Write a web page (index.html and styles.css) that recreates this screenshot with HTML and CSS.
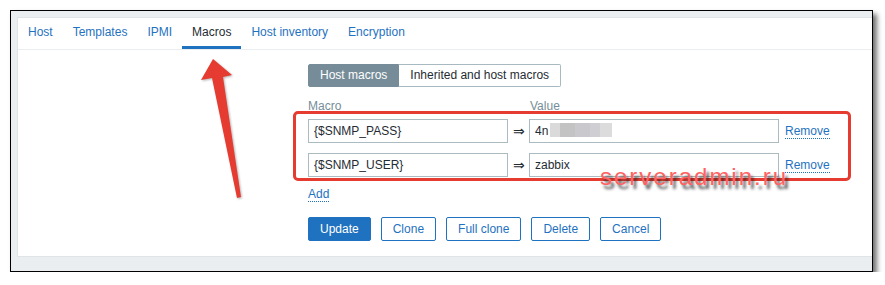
FILE: index.html
```html
<!DOCTYPE html>
<html lang="en">
<head>
  <meta charset="UTF-8" />
  <title>Host macros - Zabbix</title>
  <link rel="stylesheet" href="styles.css">
</head>
<body>
  <div class="window">
    <div class="panel">
      <ul class="tabs">
        <li><a href="#">Host</a></li>
        <li><a href="#">Templates</a></li>
        <li><a href="#">IPMI</a></li>
        <li class="active"><a href="#">Macros</a></li>
        <li><a href="#">Host inventory</a></li>
        <li><a href="#">Encryption</a></li>
      </ul>
      <div class="tab-body">
        <div class="toggle">
          <span class="toggle-item active">Host macros</span>
          <span class="toggle-item">Inherited and host macros</span>
        </div>

        <div class="macro-grid macro-head">
          <span>Macro</span>
          <span></span>
          <span>Value</span>
        </div>
        <div class="macro-grid macro-row">
          <input class="form-input" value="{$SNMP_PASS}" />
          <span class="arrow">&rArr;</span>
          <div class="value-cell">
            <input class="form-input" value="4n" />
            <span class="redacted"></span>
          </div>
          <span class="link">Remove</span>
        </div>
        <div class="macro-grid macro-row">
          <input class="form-input" value="{$SNMP_USER}" />
          <span class="arrow">&rArr;</span>
          <div class="value-cell">
            <input class="form-input" value="zabbix" />
          </div>
          <span class="link">Remove</span>
        </div>

        <span class="link add">Add</span>

        <div class="buttons">
          <button class="btn btn-main">Update</button>
          <button class="btn">Clone</button>
          <button class="btn">Full clone</button>
          <button class="btn">Delete</button>
          <button class="btn">Cancel</button>
        </div>
      </div>
    </div>

    <!-- annotations drawn over the screenshot -->
    <div class="mark-box"></div>
    <svg class="mark-arrow" width="80" height="165" viewBox="0 0 80 165">
      <polygon points="33,9 21,30 32,28 57,148 61,147 43,27 52,25" fill="#e53b30" />
    </svg>
    <div class="watermark">serveradmin.ru</div>
  </div>
</body>
</html>
```

FILE: styles.css
```css
body {
  margin: 0;
  background: #fff;
  font-family: "Liberation Sans", Arial, sans-serif;
  font-size: 12px;
  color: #1f2c33;
}
.window {
  position: relative;
  box-sizing: border-box;
  width: 863px;
  height: 262px;
  margin: 10px 0 0 10px;
  padding: 6px 0 0 6px;
  border: 1px solid #000;
  background: #ebeef0;
  box-shadow: 4px 4px 5px rgba(0, 0, 0, 0.55);
}
.panel {
  box-sizing: border-box;
  height: 240px;
  background: #fff;
  border: 1px solid #dfe4e7;
  border-right: none;
}
.tabs {
  display: flex;
  margin: 0;
  padding: 0;
  list-style: none;
  border-bottom: 1px solid #ebeef0;
}
.tabs a {
  display: block;
  padding: 0 10px;
  line-height: 28px;
  border-bottom: 3px solid transparent;
  color: #1f72bf;
  text-decoration: none;
}
.tabs .active a {
  color: #1f2c33;
  border-bottom-color: #1f72bf;
}
.tab-body {
  padding: 14px 0 0 290px;
}
.toggle {
  display: flex;
}
.toggle-item {
  padding: 0 11px;
  line-height: 21px;
  border: 1px solid #a9b9c1;
  color: #1f2c33;
}
.toggle-item + .toggle-item {
  border-left: none;
  border-radius: 0 2px 2px 0;
}
.toggle-item.active {
  background: #768d99;
  border-color: #768d99;
  color: #fff;
  border-radius: 2px 0 0 2px;
}
.macro-grid {
  display: grid;
  grid-template-columns: 200px 21px 250px auto;
  align-items: center;
}
.macro-head {
  margin: 12px 0 6px;
  line-height: 14px;
  color: #768d99;
}
.macro-head span:last-child {
  padding-left: 1px;
}
.macro-row + .macro-row {
  margin-top: 10px;
}
.form-input {
  box-sizing: border-box;
  width: 100%;
  height: 24px;
  margin: 0;
  padding: 0 5px;
  border: 1px solid #acbbc2;
  background: #fff;
  font-family: inherit;
  font-size: 12px;
  color: #1f2c33;
}
.arrow {
  text-align: center;
  font-size: 14px;
  color: #1f2c33;
}
.value-cell {
  position: relative;
}
.redacted {
  position: absolute;
  left: 21px;
  top: 4px;
  width: 62px;
  height: 14px;
  background: linear-gradient(90deg, #dadada 0 16%, #c3c3c3 16% 40%, #c8c8cd 40% 64%, #cfcfd3 64% 80%, #dcdcdc 80%);
}
.link {
  color: #1f72bf;
  border-bottom: 1px dotted #1f72bf;
  cursor: pointer;
}
.macro-row .link {
  justify-self: start;
  margin-left: 6px;
  line-height: 14px;
}
.add {
  display: inline-block;
  margin-top: 10px;
  line-height: 14px;
}
.buttons {
  display: flex;
  gap: 10px;
  margin-top: 15px;
}
.btn {
  height: 24px;
  padding: 0 11px;
  border: 1px solid #1f72bf;
  border-radius: 2px;
  background: #fff;
  color: #1f72bf;
  font-family: inherit;
  font-size: 12px;
  cursor: pointer;
}
.btn-main {
  background: #1f72bf;
  color: #fff;
}
.mark-box {
  position: absolute;
  left: 282px;
  top: 100px;
  width: 558px;
  height: 70px;
  box-sizing: border-box;
  border: 3px solid #e53b30;
  border-radius: 5px;
}
.mark-arrow {
  position: absolute;
  left: 169px;
  top: 39px;
  filter: drop-shadow(1px 1px 1px rgba(0, 0, 0, 0.3));
}
.watermark {
  position: absolute;
  left: 589px;
  top: 154px;
  font-size: 24px;
  line-height: 24px;
  letter-spacing: 2px;
  color: #ff6262;
  text-shadow: 3px 4px 3px rgba(30, 30, 30, 0.8);
}
```
